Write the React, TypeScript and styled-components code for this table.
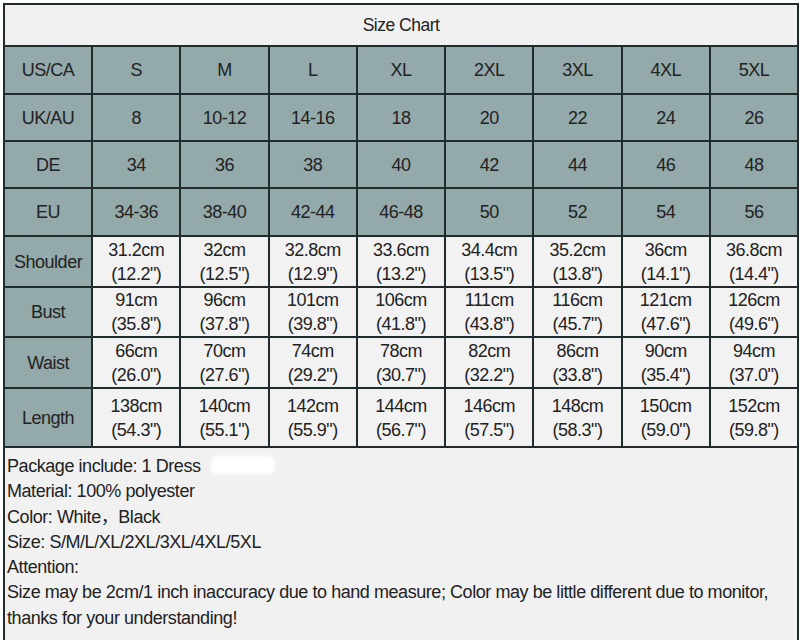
import styled, { createGlobalStyle } from 'styled-components';

const GlobalStyle = createGlobalStyle`
  html, body {
    margin: 0;
    padding: 0;
    background: #ffffff;
  }
  body {
    font-family: "Liberation Sans", Arial, "Noto Sans CJK SC", sans-serif;
    color: #222;
  }
`;

const Page = styled.div`
  padding: 3px 0 0 3px;
  width: 800px;
  box-sizing: border-box;
`;

const Chart = styled.table`
  width: 794px;
  border-collapse: collapse;
  table-layout: fixed;
  border: 2px solid #1f2b2c;
  font-size: 18px;
  letter-spacing: -0.5px;
`;

const TitleCell = styled.th`
  height: 40px;
  background: #f1f1f1;
  font-weight: 400;
  font-size: 17.5px;
  text-align: center;
  border: 2px solid #1f2b2c;
  padding: 0;
`;

const Cell = styled.td<{ $head?: boolean; $label?: boolean; $h: number }>`
  height: ${p => p.$h}px;
  padding: 0;
  text-align: center;
  vertical-align: middle;
  line-height: 24px;
  border: 2px solid #1f2b2c;
  background: ${p => (p.$head || p.$label ? '#93a9aa' : '#f2f2f2')};
`;

const NotesCell = styled.td`
  height: 186px;
  padding: 6px 2px 5px 2px;
  vertical-align: top;
  text-align: left;
  background: #f1f1f1;
  border: 2px solid #1f2b2c;
  font-size: 18px;
  letter-spacing: -0.44px;
  line-height: 25.3px;
`;

const NoteLine = styled.div`
  white-space: nowrap;
`;

const Smudge = styled.span`
  display: inline-block;
  width: 64px;
  height: 18px;
  margin-left: 10px;
  vertical-align: -2px;
  background: #ffffff;
  border-radius: 6px;
  filter: blur(1.5px);
`;

const sizes = ['S', 'M', 'L', 'XL', '2XL', '3XL', '4XL', '5XL'];

const headRows: { label: string; values: string[]; h: number }[] = [
  { label: 'US/CA', values: sizes, h: 46 },
  { label: 'UK/AU', values: ['8', '10-12', '14-16', '18', '20', '22', '24', '26'], h: 45 },
  { label: 'DE', values: ['34', '36', '38', '40', '42', '44', '46', '48'], h: 45 },
  { label: 'EU', values: ['34-36', '38-40', '42-44', '46-48', '50', '52', '54', '56'], h: 46 },
];

const measureRows: { label: string; cm: string[]; inch: string[]; h: number }[] = [
  {
    label: 'Shoulder',
    cm: ['31.2', '32', '32.8', '33.6', '34.4', '35.2', '36', '36.8'],
    inch: ['12.2', '12.5', '12.9', '13.2', '13.5', '13.8', '14.1', '14.4'],
    h: 49,
  },
  {
    label: 'Bust',
    cm: ['91', '96', '101', '106', '111', '116', '121', '126'],
    inch: ['35.8', '37.8', '39.8', '41.8', '43.8', '45.7', '47.6', '49.6'],
    h: 48,
  },
  {
    label: 'Waist',
    cm: ['66', '70', '74', '78', '82', '86', '90', '94'],
    inch: ['26.0', '27.6', '29.2', '30.7', '32.2', '33.8', '35.4', '37.0'],
    h: 49,
  },
  {
    label: 'Length',
    cm: ['138', '140', '142', '144', '146', '148', '150', '152'],
    inch: ['54.3', '55.1', '55.9', '56.7', '57.5', '58.3', '59.0', '59.8'],
    h: 57,
  },
];

export default function App() {
  return (
    <>
      <GlobalStyle />
      <Page>
        <Chart>
          <colgroup>
            {Array.from({ length: 9 }).map((_, i) => (
              <col key={i} style={{ width: `${794 / 9}px` }} />
            ))}
          </colgroup>
          <thead>
            <tr>
              <TitleCell colSpan={9}>Size Chart</TitleCell>
            </tr>
          </thead>
          <tbody>
            {headRows.map(row => (
              <tr key={row.label}>
                <Cell $head $h={row.h}>{row.label}</Cell>
                {row.values.map((v, i) => (
                  <Cell $head $h={row.h} key={i}>
                    {v}
                  </Cell>
                ))}
              </tr>
            ))}
            {measureRows.map(row => (
              <tr key={row.label}>
                <Cell $label $h={row.h}>{row.label}</Cell>
                {row.cm.map((v, i) => (
                  <Cell $h={row.h} key={i}>
                    {v}cm
                    <br />({row.inch[i]}")
                  </Cell>
                ))}
              </tr>
            ))}
            <tr>
              <NotesCell colSpan={9}>
                <NoteLine>
                  Package include: 1 Dress
                  <Smudge />
                </NoteLine>
                <NoteLine>Material: 100% polyester</NoteLine>
                <NoteLine>Color: White，Black</NoteLine>
                <NoteLine>Size: S/M/L/XL/2XL/3XL/4XL/5XL</NoteLine>
                <NoteLine>Attention:</NoteLine>
                <NoteLine>
                  Size may be 2cm/1 inch inaccuracy due to hand measure; Color may be little different due to monitor,
                </NoteLine>
                <NoteLine>thanks for your understanding!</NoteLine>
              </NotesCell>
            </tr>
          </tbody>
        </Chart>
      </Page>
    </>
  );
}
